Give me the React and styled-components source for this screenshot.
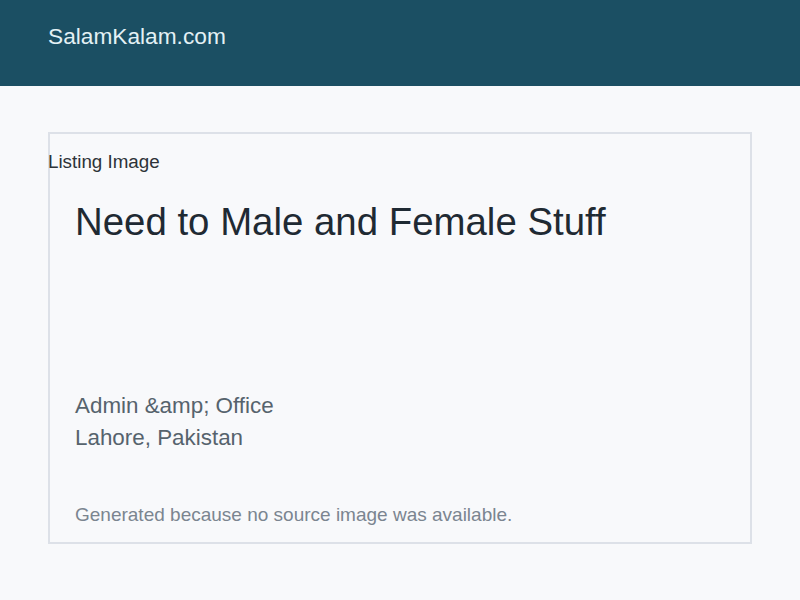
import React from "react";
import styled, { createGlobalStyle } from "styled-components";

const Global = createGlobalStyle`
  html, body { margin: 0; padding: 0; background: #f8f9fb; }
  body { font-family: "Liberation Sans", Arial, sans-serif; }
  * { box-sizing: border-box; }
`;

const Header = styled.header`
  height: 86px;
  background: #1b4f63;
  display: flex;
  align-items: flex-start;
  padding: 22px 48px 0;
`;

const Brand = styled.div`
  color: #e3f1f5;
  font-size: 22.7px;
  line-height: 28px;
`;

const Main = styled.main`
  padding: 46px 48px 0;
`;

const Card = styled.section`
  position: relative;
  height: 412px;
  border: 2px solid #dde1e8;
  display: flex;
  flex-direction: column;
  padding: 66px 25px 0;
`;

const AltLabel = styled.span`
  position: absolute;
  top: 17px;
  left: -2px;
  font-size: 18.8px;
  color: #2d3338;
`;

const Title = styled.h1`
  margin: 0;
  font-weight: 400;
  font-size: 38.4px;
  line-height: 44px;
  color: #1f2a33;
`;

const Meta = styled.div`
  margin-top: 146px;
  font-size: 22.4px;
  line-height: 32px;
  color: #56636d;
`;

const Note = styled.p`
  margin: 50px 0 0;
  font-size: 19px;
  line-height: 22px;
  color: #7b8590;
`;

export default function App() {
  return (
    <>
      <Global />
      <Header>
        <Brand>SalamKalam.com</Brand>
      </Header>
      <Main>
        <Card>
          <AltLabel>Listing Image</AltLabel>
          <Title>Need to Male and Female Stuff</Title>
          <Meta>
            <div>Admin &amp;amp; Office</div>
            <div>Lahore, Pakistan</div>
          </Meta>
          <Note>Generated because no source image was available.</Note>
        </Card>
      </Main>
    </>
  );
}
